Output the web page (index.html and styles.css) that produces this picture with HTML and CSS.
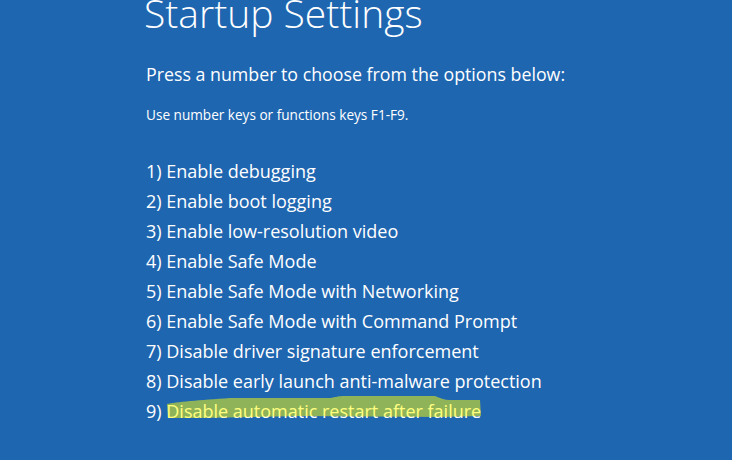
FILE: index.html
```html
<!DOCTYPE html>
<html lang="en">
<head>
    <meta charset="UTF-8">
    <meta name="viewport" content="width=device-width, initial-scale=1.0">
    <title>Startup Settings</title>
    <link rel="stylesheet" href="styles.css">
</head>
<body>
    <div class="screen">
        <h1>Startup Settings</h1>
        <p class="lead">Press a number to choose from the options below:</p>
        <p class="hint">Use number keys or functions keys F1-F9.</p>

        <!-- Options list -->
        <ol class="options">
            <li>1) Enable debugging</li>
            <li>2) Enable boot logging</li>
            <li>3) Enable low-resolution video</li>
            <li>4) Enable Safe Mode</li>
            <li>5) Enable Safe Mode with Networking</li>
            <li>6) Enable Safe Mode with Command Prompt</li>
            <li>7) Disable driver signature enforcement</li>
            <li>8) Disable early launch anti-malware protection</li>
            <li>9) Disable automatic restart after failure</li>
        </ol>
    </div>

    <!-- Marker highlight drawn over option 9 -->
    <svg class="marker" width="732" height="460" viewBox="0 0 732 460">
        <path d="M167 404 C175 402 200 400 230 398 L330 398 C336 397 338 396 345 396 L435 396 C440 398 444 400 450 400 L480 400 L481 416 L440 417 L300 416 L200 418 L168 418 Z" />
    </svg>
</body>
</html>
```

FILE: styles.css
```css
body {
    margin: 0;
    width: 732px;
    height: 460px;
    overflow: hidden;
    background-color: #1f66b0;
    color: #fff;
    font-family: "Open Sans", "Noto Sans", sans-serif;
}

.screen {
    padding-left: 144px;
}

h1 {
    margin: -9px 0 0;
    font-size: 39px;
    line-height: 44px;
    font-weight: 300;
}

.lead {
    margin: 27px 0 0 2px;
    font-size: 17.8px;
    line-height: 24px;
}

.hint {
    margin: 20px 0 0 2px;
    font-size: 13.6px;
    line-height: 18px;
}

.options {
    list-style: none;
    margin: 32px 0 0 2px;
    padding: 0;
}

.options li {
    font-size: 18px;
    line-height: 30px;
}

.marker {
    position: absolute;
    top: 0;
    left: 0;
    pointer-events: none;
}

.marker path {
    fill: #ffff00;
    opacity: 0.5;
}
```
